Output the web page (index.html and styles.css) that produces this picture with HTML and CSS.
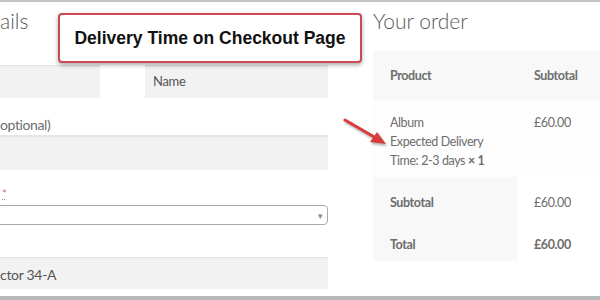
FILE: index.html
```html
<!DOCTYPE html>
<html lang="en">
<head>
  <meta charset="UTF-8" />
  <title>Delivery Time on Checkout Page</title>
  <link rel="stylesheet" href="styles.css">
</head>
<body>
  <div class="frame">
    <div class="checkout">

      <div class="billing">
        <h3 class="col-title">ails</h3>
        <div class="name-row">
          <div class="field"></div>
          <div class="field">Name</div>
        </div>
        <label class="lbl lbl-opt">optional)</label>
        <div class="field field-wide"></div>
        <label class="lbl lbl-req"><abbr>*</abbr></label>
        <div class="select"><span class="caret">&#9662;</span></div>
        <div class="field field-wide field-addr">ctor 34-A</div>
      </div>

      <div class="order">
        <h3 class="col-title">Your order</h3>
        <table class="order-table">
          <thead>
            <tr><th class="c-prod">Product</th><th>Subtotal</th></tr>
          </thead>
          <tbody>
            <tr>
              <td class="c-prod">Album<br>Expected Delivery<br>Time: 2-3 days <strong class="qty">&times;&nbsp;1</strong></td>
              <td>&pound;60.00</td>
            </tr>
          </tbody>
          <tfoot>
            <tr><th class="c-prod">Subtotal</th><td>&pound;60.00</td></tr>
            <tr class="total"><th class="c-prod">Total</th><td>&pound;60.00</td></tr>
          </tfoot>
        </table>
      </div>

    </div>

    <div class="callout">Delivery Time on Checkout Page</div>

    <svg class="arrow" width="50" height="32" viewBox="0 0 50 32">
      <line x1="3" y1="3" x2="34" y2="21" stroke="#d93a3a" stroke-width="3" stroke-linecap="round"/>
      <polygon points="44,27 28,25 35,15" fill="#d93a3a"/>
    </svg>
  </div>
</body>
</html>
```

FILE: styles.css
```css
body {
  margin: 0;
  background: #fff;
  font-family: Lato, "Open Sans", sans-serif;
  color: #6d6d6d;
  overflow: hidden;
}

.frame {
  position: relative;
  box-sizing: border-box;
  height: 300px;
  border-top: 2px solid #c4c4c4;
  border-bottom: 4px solid #b9b9b9;
  overflow: hidden;
}

.checkout {
  display: grid;
  grid-template-columns: 328px 227px;
  column-gap: 45px;
}

.col-title {
  margin: 0;
  padding-top: 7px;
  height: 39px;
  font-size: 21px;
  font-weight: 300;
  color: #5a5a5a;
  line-height: 24px;
}

/* billing side */
.name-row {
  display: grid;
  grid-template-columns: 100px 183px;
  column-gap: 45px;
  margin-top: 17px;
}

.field {
  background: #f2f2f2;
  height: 33px;
  box-sizing: border-box;
  padding: 8px 8px 0;
  font-size: 13px;
  line-height: 17px;
  letter-spacing: -0.3px;
  color: #555;
  box-shadow: inset 0 1px 1px rgba(0, 0, 0, 0.06);
}

.field-wide {
  height: 34px;
}

.field-addr {
  margin-top: 32px;
  padding: 9px 0 0;
  font-size: 14px;
  height: 32px;
}

.lbl {
  display: block;
  font-size: 14px;
  line-height: 18px;
  letter-spacing: -0.4px;
  color: #6d6d6d;
}

.lbl-opt {
  margin-top: 18px;
  padding-bottom: 1px;
  border-bottom: 1px solid #e6e6e6;
}

.lbl-req {
  margin-top: 14px;
  height: 16px;
  padding-left: 2px;
}

.lbl-req abbr {
  color: #c2776f;
  font-size: 11px;
  text-decoration: underline dotted;
}

.select {
  display: flex;
  justify-content: flex-end;
  align-items: center;
  box-sizing: border-box;
  height: 20px;
  margin-top: 5px;
  margin-left: -4px;
  padding-right: 4px;
  border: 1px solid #aaa;
  border-radius: 4px;
}

.caret {
  font-size: 9px;
  color: #888;
}

/* order side */
.order-table {
  width: 260px;
  border-collapse: collapse;
  font-size: 12.5px;
  letter-spacing: -0.4px;
  margin-top: 2px;
}

.order-table th,
.order-table td {
  text-align: left;
  vertical-align: top;
  padding: 18px 0 0 17px;
}

.order-table .c-prod {
  width: 127px;
}

.order-table thead th {
  background: #f8f8f8;
  height: 32px;
  font-weight: 700;
}

.order-table tbody td {
  background: #fdfdfd;
  height: 64px;
  line-height: 19px;
  padding-top: 13px;
}

.order-table .qty {
  font-weight: 700;
}

.order-table tfoot th {
  background: #f8f8f8;
  font-weight: 700;
  height: 24px;
}

.order-table tfoot td {
  background: #fff;
  height: 24px;
}

.order-table .total td {
  font-weight: 700;
}

/* overlay annotations */
.callout {
  position: absolute;
  left: 58px;
  top: 11px;
  width: 304px;
  height: 50px;
  box-sizing: border-box;
  border: 2px solid #cc4a52;
  border-radius: 4px;
  background: #fff;
  box-shadow: 0 2px 4px rgba(0, 0, 0, 0.35);
  display: flex;
  align-items: center;
  justify-content: center;
  font-family: "Liberation Sans", Arial, sans-serif;
  font-weight: 700;
  font-size: 17.5px;
  color: #111;
}

.arrow {
  position: absolute;
  left: 342px;
  top: 115px;
  filter: drop-shadow(1px 2px 1px rgba(0, 0, 0, 0.3));
}
```
